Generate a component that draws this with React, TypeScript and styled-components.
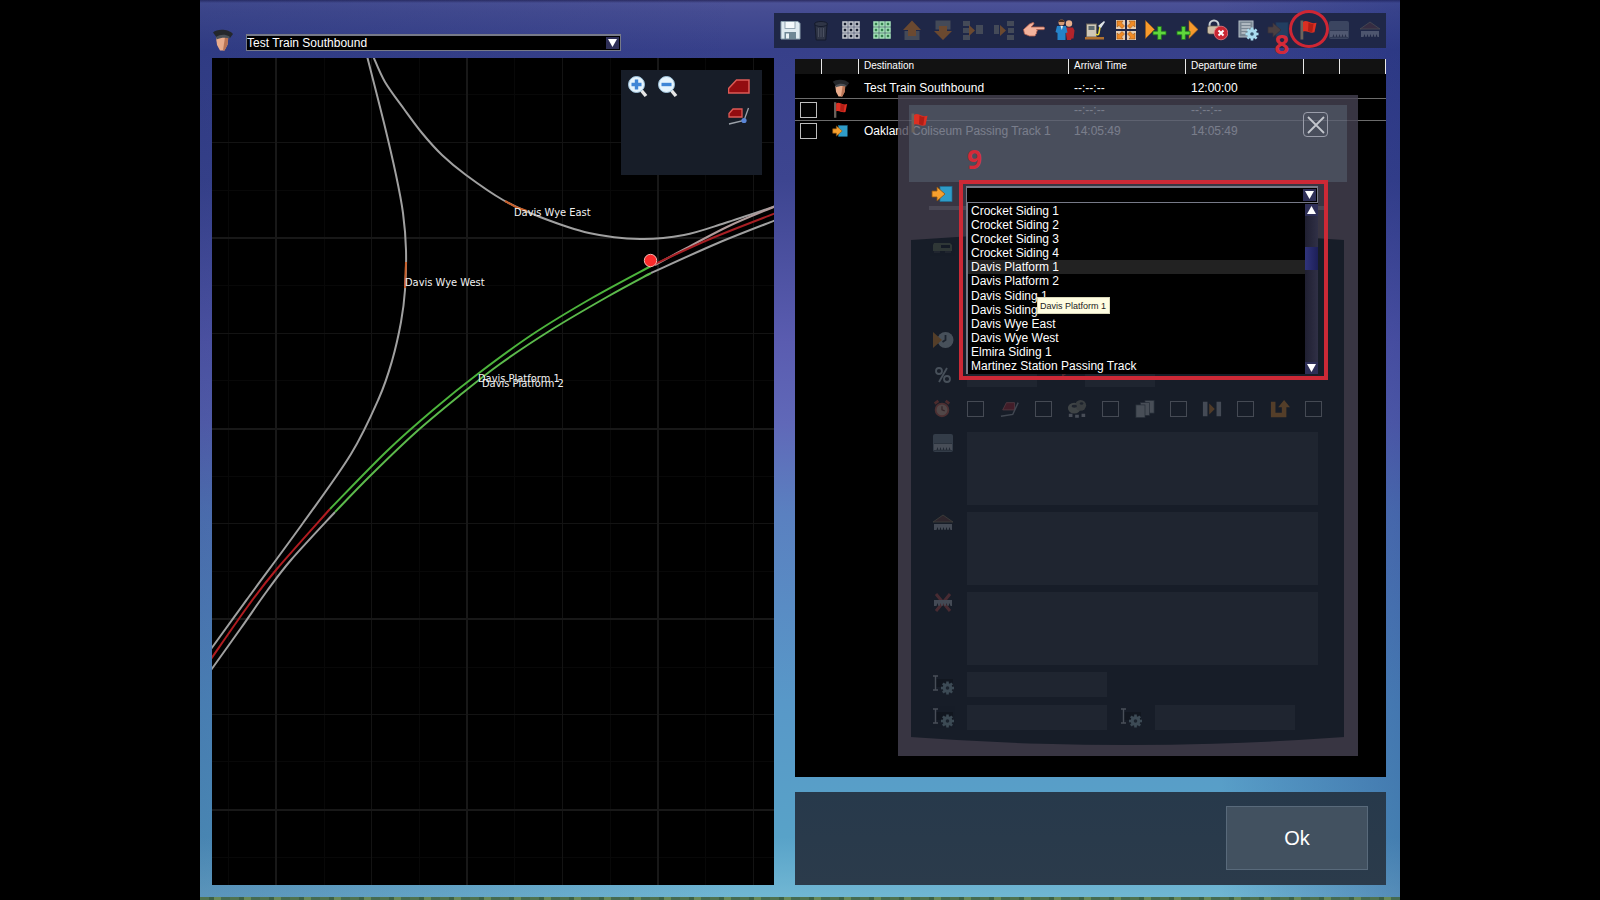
import React from "react";
import styled, { createGlobalStyle, css } from "styled-components";

const Global = createGlobalStyle`
  *, *::before, *::after { box-sizing: border-box; }
  body { margin: 0; background: #000; }
  button, input, select, textarea { font: inherit; color: inherit; margin: 0; }
`;

/* ---------- icons ---------- */

type Part = React.ReactNode;

const gear = (cx: number, cy: number, r: number, fill: string, hole: string): Part => (
  <g>
    {[0, 45, 90, 135].map((a) => (
      <rect key={a} x={cx - 1.3} y={cy - r} width={2.6} height={r * 2} fill={fill} transform={`rotate(${a} ${cx} ${cy})`} />
    ))}
    <circle cx={cx} cy={cy} r={r * 0.74} fill={fill} />
    <circle cx={cx} cy={cy} r={r * 0.28} fill={hole} />
  </g>
);

const dots = (stroke: string, fill: string): Part =>
  [0, 1, 2].map((r) =>
    [0, 1, 2].map((c) => (
      <rect key={`${r}${c}`} x={3 + c * 6} y={3 + r * 6} width={4} height={4} fill={fill} stroke={stroke} strokeWidth={1.5} />
    ))
  );

const greenPlus = (x: number, y: number): Part => (
  <path d={`M${x - 1.8} ${y - 6.5}h3.600v4.700h4.700v3.600h-4.700v4.700h-3.600v-4.700h-4.700v-3.600h4.700z`} fill="#5fd83c" stroke="#1f7a1c" strokeWidth="0.8" />
);

const teeth = (y: number, fill: string): Part => (
  <path d={`M2 ${y}h18v6h-1.5l-1-3-1 3h-1l-1-3-1 3h-1l-1-3-1 3h-1l-1-3-1 3h-1l-1-3-1 3H2z`} fill={fill} />
);

const icons: Record<string, Part> = {
  save: (
    <g>
      <path d="M2 2.5h17l2 2V20H2z" fill="#dfeaf0" stroke="#8ba0ae" />
      <rect x="6" y="2.5" width="10" height="7" fill="#f4f9fb" stroke="#7f93a1" strokeWidth="0.8" />
      <rect x="5.5" y="13" width="11.5" height="7" fill="#6f8795" />
      <rect x="7" y="14.5" width="3" height="5" fill="#e9f1f5" />
    </g>
  ),
  bin: (
    <g fill="#2f3546" stroke="#151b2c">
      <path d="M5 6h12l-1.2 15H6.200z" />
      <ellipse cx="11" cy="5" rx="6.500" ry="2.500" />
      <path d="M8.500 9v9M11 9v9M13.500 9v9" stroke="#4a5060" />
    </g>
  ),
  grid: <g>{dots("#c9ccd4", "#1a2033")}</g>,
  gridGreen: <g>{dots("#a8e8bc", "#36804f")}</g>,
  up: (
    <g>
      <rect x="3.500" y="12" width="15" height="9" fill="#444a58" />
      <path d="M11 1.500l9 9.500h-5v6H7v-6H2z" fill="#6b4930" />
    </g>
  ),
  down: (
    <g>
      <rect x="3.500" y="1.500" width="15" height="9" fill="#444a58" />
      <path d="M11 21l9-9h-5V7H7v5H2z" fill="#6b4930" />
    </g>
  ),
  merge: (
    <g>
      <path d="M1 2h7v5H1zM1 9h6v5H1zM1 16h7v5H1zM14 6h7v9h-7z" fill="#444a58" />
      <path d="M7 6l6 5.500-6 5.500z" fill="#6b4930" />
    </g>
  ),
  split: (
    <g>
      <path d="M14 2h7v5h-7zM15 9h6v5h-6zM14 16h7v5h-7zM1 6h5v9H1z" fill="#444a58" />
      <path d="M7 6l6 5.500-6 5.500z" fill="#6b4930" />
    </g>
  ),
  hand: (
    <path
      d="M0.500 10.500l6-5.500 3.500-1.500c1.500 0 1 1.500 0 2.500l-2 2h12.500c1.500 0 1.500 2.600 0 2.600h-7c1.300.5 1 2.200-.2 2.400.8.8.3 2-.7 2.200.3 1-.3 1.800-1.500 1.800H6.500L1.500 15z"
      fill="#f3b39d" stroke="#b5604c" strokeWidth="0.800"
    />
  ),
  people: (
    <g>
      <circle cx="15" cy="4.500" r="3.200" fill="#e9b08c" />
      <path d="M11 8.500h8l1.500 3-1 8h-2L17 21h-4z" fill="#b3242b" />
      <circle cx="7.500" cy="3.500" r="3" fill="#d79a72" />
      <path d="M4.500 3c0-3.500 6-3.500 6 0z" fill="#4a2e1c" />
      <path d="M3 7h9l1.500 6.500-2 .5V21h-8v-7L1.500 13z" fill="#2583c9" />
      <path d="M6.500 7h2.500l-1.200 4z" fill="#e8f2fa" />
    </g>
  ),
  pump: (
    <g>
      <rect x="2.500" y="5" width="10" height="13" fill="#cfc8b8" stroke="#6b655a" />
      <rect x="4.500" y="7" width="6" height="4" fill="#5d6a70" />
      <rect x="1" y="18" width="19" height="2.500" fill="#b0702f" />
      <path d="M12 15c5 4 2-9 6-10" fill="none" stroke="#e6d83a" strokeWidth="1.600" />
      <path d="M14 7l6-5 1 1-4 6z" fill="#dde3e8" />
    </g>
  ),
  spread: (
    <g>
      <rect x="1" y="1" width="9" height="9" fill="#e6cdb0" />
      <rect x="12" y="1" width="9" height="9" fill="#e6cdb0" />
      <rect x="1" y="12" width="9" height="9" fill="#e6cdb0" />
      <rect x="12" y="12" width="9" height="9" fill="#e6cdb0" />
      <path d="M2 2h6L6.500 4 9.500 7l-2.500 2.500-3-3L2 8zM20 2v6l-2-1.500-3 3L12.500 7l3-3L14 2zM2 20v-6l2 1.500 3-3L9.500 15l-3 3L8 20zM20 20h-6l1.500-2-3-3 2.500-2.500 3 3L20 14z" fill="#f08a24" stroke="#8b4a12" strokeWidth="0.500" />
    </g>
  ),
  addAfter: (
    <g>
      <path d="M0.500 1.500l9 9-9 9z" fill="#f79a2c" stroke="#9c5a14" strokeWidth="0.600" />
      {greenPlus(14.5, 14)}
    </g>
  ),
  addBefore: (
    <g>
      <path d="M13 1.500l9 9-9 9z" fill="#f79a2c" stroke="#9c5a14" strokeWidth="0.600" />
      {greenPlus(7.5, 14)}
    </g>
  ),
  remove: (
    <g>
      <circle cx="8" cy="6" r="4.500" fill="none" stroke="#c9d0d4" strokeWidth="2" />
      <rect x="1.500" y="7" width="13" height="8" rx="2" fill="#cdbfa8" stroke="#5c564c" strokeWidth="0.700" />
      <circle cx="15" cy="14" r="6.800" fill="#c92733" stroke="#e87a80" strokeWidth="0.800" />
      <path d="M12.500 11.500l5 5M17.500 11.500l-5 5" stroke="#fff" strokeWidth="2" />
    </g>
  ),
  settings: (
    <g>
      <rect x="2" y="2" width="14" height="16" fill="#7b8894" stroke="#b5bfc8" />
      <path d="M4.500 5h9M4.500 8h9M4.500 11h7M4.500 14h4" stroke="#e3e8ec" strokeWidth="1.200" />
      {gear(15, 15, 6.5, "#a9dbee", "#3a5870")}
    </g>
  ),
  goto: (
    <g>
      <rect x="9" y="3.500" width="12" height="15" fill="#2f9cc8" stroke="#1d6f94" strokeWidth="0.700" />
      <path d="M1 8h5V4l8 7-8 7v-4H1z" fill="#f6a02e" stroke="#8f5310" strokeWidth="0.800" />
    </g>
  ),
  flag: (
    <g>
      <rect x="2.500" y="1.500" width="2.800" height="19" fill="#6b635c" />
      <path d="M5 3c4-3 7 2.800 13.500.8l-2 9.500c-4.500 1.800-7-2.300-11.500-.8z" fill="#dc2f22" />
      <path d="M10.500 3.500c1.500 1.200 3 1.500 5 1.200l-1.200 8.300c-1.800 0-3-.4-4.300-1z" fill="#b01e16" />
    </g>
  ),
  platform: (
    <g>
      <rect x="1" y="2" width="20" height="18" rx="2" fill="#7d8c9b" />
      <rect x="2" y="11.500" width="18" height="7" fill="#3c4550" />
      {teeth(12, "#c3cad2")}
    </g>
  ),
  station: (
    <g>
      <path d="M1 10l10-7 10 7z" fill="#6b3a38" stroke="#a59a70" strokeWidth="0.800" />
      {teeth(12, "#b9c0c8")}
    </g>
  ),
  noStation: (
    <g>
      <path d="M4 2l14 17M18 2L4 19" stroke="#c7504e" strokeWidth="3" />
      {teeth(8, "#b9c0c8")}
    </g>
  ),
  officer: (
    <g>
      <path d="M4 8.500l12-1-.5 8-3 6H8L5 16z" fill="#e9ac8c" />
      <path d="M13 8h3.500l-1 8-3 5.500H11z" fill="#b97455" />
      <path d="M1 3.500C5-.5 17 0 21 5l-3 4c-3-2-9-1.500-12.500.5z" fill="#24272b" />
      <path d="M4 8c4-2.500 9-3 13.500-.5v2c-4-1.500-9-1-13 1z" fill="#4b5056" />
    </g>
  ),
  wagon: (
    <g>
      <path d="M2 6h16l2 2v6H1V8z" fill="#6f7d5e" />
      <rect x="9" y="8" width="9" height="3" fill="#141b26" />
      <path d="M2 15h6M13 15h6" stroke="#3b3f45" strokeWidth="2" />
    </g>
  ),
  clock: (
    <g>
      <circle cx="13.500" cy="11" r="8" fill="#c3d3dc" />
      <path d="M13.500 6v5l-3 2" fill="none" stroke="#26303b" strokeWidth="1.800" />
      <path d="M1 3l9 8-9 8z" fill="#f0952c" />
    </g>
  ),
  percent: (
    <g fill="none" stroke="#c3d3dc" strokeWidth="1.800">
      <circle cx="7" cy="7" r="3" />
      <circle cx="15" cy="15" r="3" />
      <path d="M15 4L7 18" />
    </g>
  ),
  dash: <path d="M2 5h10v-3l7 6-7 5v-3H2z" fill="#c7504e" />,
  alarm: (
    <g>
      <path d="M3 5l4-3M19 5l-4-3" stroke="#d6513c" strokeWidth="3" />
      <circle cx="11" cy="12" r="7" fill="#e8b49c" stroke="#d6604c" strokeWidth="2" />
      <path d="M11 8v4l3 1" fill="none" stroke="#7d3a2c" strokeWidth="1.400" />
    </g>
  ),
  engine: (
    <g>
      <path d="M3 12l4-8h9v8z" fill="#b3202c" stroke="#e07a7a" />
      <path d="M1 19l13-2 6-13" fill="none" stroke="#aeb4bd" strokeWidth="1.600" />
    </g>
  ),
  drums: (
    <g>
      <ellipse cx="8" cy="10" rx="7" ry="6" fill="#a8a894" />
      <ellipse cx="15" cy="7" rx="6" ry="6" fill="#90917f" />
      <ellipse cx="8" cy="8" rx="3" ry="1.600" fill="#30343a" />
      <ellipse cx="16" cy="5" rx="2" ry="1.400" fill="#30343a" />
      <path d="M2 18h4M9 19h4M16 18h4" stroke="#c6cbd2" strokeWidth="3.500" />
    </g>
  ),
  copies: (
    <g fill="#c6ced2" stroke="#4a525c" strokeWidth="0.800">
      <rect x="11" y="1.500" width="10" height="14" />
      <rect x="6" y="4" width="10" height="14" />
      <rect x="1" y="6.500" width="10" height="14" />
    </g>
  ),
  couple: (
    <g>
      <path d="M1 3h5v16H1zM16 3h5v16h-5z" fill="#b7c0c8" />
      <path d="M8 5l6 6-6 6z" fill="#e58a2a" />
    </g>
  ),
  turn: <path d="M1 3h5v12h7V9H9l6.500-8L22 9h-4v11H1z" fill="#f0952c" />,
  rename: (
    <g>
      <rect x="4" y="5" width="17" height="8" fill="#06090e" />
      <path d="M1 2h5M3.500 2v14M1 16h5" stroke="#c8ced5" strokeWidth="1.400" />
      {gear(15.5, 14, 6.5, "#9dc0c9", "#26343f")}
    </g>
  ),
  zoomIn: (
    <g>
      <path d="M14 14l5 6" stroke="#e6e6e6" strokeWidth="3.500" />
      <circle cx="9.500" cy="8.500" r="8" fill="#e6f4fd" stroke="#9fc4dd" />
      <path d="M9.500 3.500v10M4.500 8.500h10" stroke="#3f86d6" strokeWidth="3.400" />
    </g>
  ),
  zoomOut: (
    <g>
      <path d="M14 14l5 6" stroke="#e6e6e6" strokeWidth="3.500" />
      <circle cx="9.500" cy="8.500" r="8" fill="#e6f4fd" stroke="#9fc4dd" />
      <path d="M4.500 8.500h10" stroke="#3f86d6" strokeWidth="3.400" />
    </g>
  ),
  loco: <path d="M0.500 12.500l8-8.500h12.500v13H0.500z" fill="#930c10" stroke="#dd5a55" strokeWidth="1.500" />,
  locoPath: (
    <g>
      <path d="M1 7.500l4-4.500h9v8H1z" fill="#930c10" stroke="#dd5a55" strokeWidth="1.300" />
      <path d="M1 18l15-3.500 4.500-12.500" fill="none" stroke="#9da3ab" strokeWidth="1.300" />
      <circle cx="16" cy="14.500" r="2.600" fill="#5a86d8" />
    </g>
  ),
  close: <path d="M3 3l16 16M19 3L3 19" stroke="#c3c6cd" strokeWidth="1.800" fill="none" />,
};

const Glyph = styled.svg<{ $size: number; $dim: number }>`
  display: block;
  flex: none;
  width: ${(p) => p.$size}px;
  height: ${(p) => p.$size}px;
  opacity: ${(p) => p.$dim};
`;

const Icon = ({ name, size = 22, dim = 1 }: { name: string; size?: number; dim?: number }) => (
  <Glyph viewBox="0 0 22 22" $size={size} $dim={dim} aria-hidden="true">
    {icons[name]}
  </Glyph>
);

/* ---------- frame ---------- */

const Screen = styled.div`
  min-height: 100vh;
  display: flex;
  justify-content: center;
  background: #000;
  color: #fff;
  font: 12px/14px "Liberation Sans", Arial, sans-serif;
`;

const Stage = styled.div`
  width: 75%;
  display: flex;
  flex-direction: column;
  background:
    linear-gradient(90deg, rgba(24, 44, 110, 0.25), transparent 45%, transparent 85%, rgba(20, 40, 120, 0.3)),
    linear-gradient(180deg, #2c2c62 0, #4b5196 3px, #454c92 12px, #37408a 50px, #3d4590 20%, #5a5cb0 38%, #6068b8 47%, #5a80c0 57%, #5898c8 78%, #58a2c8 93%, #72b8d4 100%);
`;

const Workspace = styled.div`
  flex: 1;
  display: grid;
  grid-template-columns: 574fr 626fr;
  padding-bottom: 12px;
`;

const Grass = styled.div`
  height: 3px;
  background: repeating-linear-gradient(90deg, #4f7350 0 9px, #3d6146 9px 14px, #688a58 14px 21px, #456b52 21px 30px);
`;

const LeftColumn = styled.div`
  display: flex;
  flex-direction: column;
  padding-left: 12px;
`;

const RightColumn = styled.div`
  display: flex;
  flex-direction: column;
  padding: 13px 14px 0 0;
`;

const TrainBar = styled.div`
  height: 58px;
  display: flex;
  align-items: flex-start;
  gap: 12px;
  padding: 29px 0 0 0;
`;

/* ---------- drop-down ---------- */

const ComboBox = styled.div<{ $wide?: boolean }>`
  position: relative;
  height: 17px;
  border: 1px solid #777a88;
  border-top-width: 2px;
  background: #000;
  ${(p) =>
    p.$wide
      ? css`flex: 1;`
      : css`
          flex: 0 1 375px;
          margin-top: 5px;
        `}
`;

const ComboSelect = styled.select`
  display: block;
  appearance: none;
  width: 100%;
  height: 14px;
  padding: 0;
  border: 0;
  outline: 0;
  background: transparent;
  color: #fff;
  line-height: 14px;
`;

const arrowBox = css`
  display: flex;
  align-items: center;
  justify-content: center;
  width: 13px;
  height: 12px;
  padding: 0;
  border: 0;
  background: #2e2f57;
`;

const ComboArrow = styled.span`
  ${arrowBox}
  position: absolute;
  top: 1px;
  right: 1px;
  pointer-events: none;
`;

const Arrow = ({ up }: { up?: boolean }) => (
  <svg width="9" height="8" viewBox="0 0 9 8" aria-hidden="true">
    <path d={up ? "M4.500 0L9 8H0z" : "M0 0h9L4.500 8z"} fill="#fff" />
  </svg>
);

/* ---------- map ---------- */

const MapPanel = styled.section`
  position: relative;
  flex: 1;
  overflow: hidden;
  background: #000;
`;

const MapCanvas = styled.svg`
  position: absolute;
  inset: 0;
  width: 100%;
  height: 100%;
  font-family: "DejaVu Sans Condensed", "DejaVu Sans", sans-serif;
  font-size: 11px;
`;

const MapTools = styled.div`
  position: absolute;
  top: 12px;
  right: 12px;
  width: 141px;
  height: 105px;
  display: grid;
  grid-template-columns: 22px 22px 1fr;
  grid-template-rows: 22px 22px;
  gap: 8px;
  padding: 6px 12px 0 6px;
  background: #171d28;
`;

const ToolButton = styled.button<{ $end?: boolean }>`
  display: block;
  width: 22px;
  height: 22px;
  padding: 0;
  border: 0;
  background: none;
  ${(p) => p.$end && css`
    grid-column: 3;
    justify-self: end;
  `}
`;

type Point = [number, number];

const tracks: Record<string, Point[]> = {
  west: [[367, 56], [384, 123], [396, 175], [403, 213], [406, 250], [405, 290], [401, 322], [392, 361], [379, 398], [351, 454], [303, 523], [248, 598], [211, 649]],
  east: [[373, 56], [385, 82], [404, 109], [422, 133], [442, 155], [466, 175], [503, 200], [540, 217], [589, 233], [640, 239], [684, 235], [725, 223], [776, 206]],
  junction: [[655, 265], [681, 251], [729, 226], [776, 206]],
  lowerRight: [[651, 273], [718, 243], [776, 220]],
  redRight: [[655, 264], [710, 239], [776, 213]],
  greenA: [[651, 266], [592, 298], [533, 334], [479, 373], [433, 410], [387, 451], [330, 509]],
  greenB: [[651, 273], [607, 297], [551, 330], [500, 364], [459, 396], [415, 433], [370, 476], [335, 512]],
  redLeft: [[330, 509], [276, 570], [248, 606], [211, 659]],
  lowerLeft: [[335, 512], [291, 560], [267, 591], [241, 628], [211, 670]],
  stopEast: [[505, 201], [516, 207], [527, 211]],
  stopWest: [[406, 262], [405, 288]],
};

/* Runs a rounded curve through all points of a track. */
const curve = (p: Point[]) =>
  p.slice(1).reduce((d, end, i) => {
    const start = p[i];
    const before = p[i - 1] ?? start;
    const after = p[i + 2] ?? end;
    const c1 = [start[0] + (end[0] - before[0]) / 6, start[1] + (end[1] - before[1]) / 6];
    const c2 = [end[0] - (after[0] - start[0]) / 6, end[1] - (after[1] - start[1]) / 6];
    return `${d}C${c1} ${c2} ${end}`;
  }, `M${p[0]}`);

const Rail = styled.path<{ $c: string }>`
  fill: none;
  stroke: ${(p) => p.$c};
  stroke-width: 2;
`;

const Track = ({ id, color }: { id: string; color: string }) => <Rail d={curve(tracks[id])} $c={color} />;

const GREY = "#a0a0a0";
const major = { x: [275, 466, 657, 848], y: [237, 428, 618, 809] };
const middle = { x: [371, 562, 753], y: [142, 333, 523, 714] };
const minor = { x: [228, 324, 419, 514, 610, 705], y: [94, 190, 285, 380, 476, 571, 667, 761, 857] };

const GridLines = ({ set, color, w }: { set: { x: number[]; y: number[] }; color: string; w: number }) => (
  <g fill={color}>
    {set.x.map((x) => (
      <rect key={`x${x}`} x={x} y={58} width={w} height={900} />
    ))}
    {set.y.map((y) => (
      <rect key={`y${y}`} x={212} y={y} width={900} height={w} />
    ))}
  </g>
);

const TrackMap = () => (
  <MapCanvas viewBox="212 58 562 827" preserveAspectRatio="xMinYMin slice">
    <GridLines set={minor} color="#080808" w={1} />
    <GridLines set={middle} color="#131313" w={1} />
    <GridLines set={major} color="#181818" w={2} />
    <Track id="west" color={GREY} />
    <Track id="east" color={GREY} />
    <Track id="lowerRight" color={GREY} />
    <Track id="lowerLeft" color={GREY} />
    <Track id="junction" color="#b09a9a" />
    <Track id="redRight" color="#a81f24" />
    <Track id="redLeft" color="#b01c20" />
    <Track id="greenA" color="#4cb43c" />
    <Track id="greenB" color="#5cba4c" />
    <Track id="stopEast" color="#c8602c" />
    <Track id="stopWest" color="#c8602c" />
    <circle cx="650.500" cy="260.500" r="6.200" fill="#fb2b2b" stroke="#f3b6b0" />
    <g fill="#f2f2f2">
      <text x="514" y="216">Davis Wye East</text>
      <text x="405" y="286">Davis Wye West</text>
      <text x="478" y="382">Davis Platform 1</text>
      <text x="482" y="387">Davis Platform 2</text>
    </g>
  </MapCanvas>
);

/* ---------- toolbar ---------- */

const Toolbar = styled.div`
  position: relative;
  height: 35px;
  display: flex;
  align-items: flex-start;
  justify-content: space-between;
  padding: 6px 5px 0;
  background: #1f2747;
`;

const toolbarItems: { icon: string; label: string; dim?: number }[] = [
  { icon: "save", label: "Save" },
  { icon: "bin", label: "Delete" },
  { icon: "grid", label: "Select all" },
  { icon: "gridGreen", label: "Select group" },
  { icon: "up", label: "Move up" },
  { icon: "down", label: "Move down" },
  { icon: "merge", label: "Merge" },
  { icon: "split", label: "Split" },
  { icon: "hand", label: "Point" },
  { icon: "people", label: "Passengers" },
  { icon: "pump", label: "Refuel" },
  { icon: "spread", label: "Expand" },
  { icon: "addAfter", label: "Add after" },
  { icon: "addBefore", label: "Add before" },
  { icon: "remove", label: "Remove" },
  { icon: "settings", label: "Properties" },
  { icon: "goto", label: "Go to", dim: 0.2 },
  { icon: "flag", label: "Waypoint" },
  { icon: "platform", label: "Platform", dim: 0.3 },
  { icon: "station", label: "Station", dim: 0.3 },
];

const Marker = styled.span`
  position: absolute;
  color: #d42a38;
  font: bold 26px/26px "Noto Sans", sans-serif;
`;

const StepEight = styled(Marker)`
  top: 18px;
  right: 97px;
`;

const Ring = styled.span`
  position: absolute;
  top: -3px;
  right: 57px;
  width: 40px;
  height: 38px;
  border: 3px solid #cf2634;
  border-radius: 50%;
  pointer-events: none;
`;

/* ---------- timetable ---------- */

const TimetablePanel = styled.section`
  position: relative;
  flex: 1;
  margin: 11px 0 0 21px;
  background: #000;
`;

const Timetable = styled.table`
  width: 100%;
  table-layout: fixed;
  border-collapse: separate;
  border-spacing: 0;
`;

const HeadCell = styled.th`
  height: 15px;
  padding: 0 0 0 5px;
  border-right: 1px solid #e8e8e8;
  background: #121212;
  font-size: 10px;
  line-height: 14px;
  font-weight: normal;
  text-align: left;
  vertical-align: top;
`;

const Row = styled.tr<{ $height: number; $last?: boolean }>`
  td {
    height: ${(p) => p.$height}px;
    padding: 0 0 0 5px;
    border-bottom: ${(p) => (p.$last ? 0 : 1)}px solid #6c6c6c;
    white-space: nowrap;
  }
  td:nth-child(2) {
    padding-left: 10px;
  }
  &:first-child td {
    padding-top: 3px;
  }
`;

const TickBox = styled.input<{ $faint?: boolean }>`
  appearance: none;
  display: block;
  width: 17px;
  height: 16px;
  border: 1px solid ${(p) => (p.$faint ? "#454a54" : "#bdbdbd")};
  background: transparent;
`;

/* ---------- dialog ---------- */

const Dialog = styled.div`
  position: absolute;
  top: 36px;
  right: 28px;
  width: 460px;
  padding: 10px 0 11px;
  background: rgba(72, 68, 85, 0.78);
`;

const DialogHead = styled.header`
  height: 77px;
  display: flex;
  align-items: flex-start;
  justify-content: space-between;
  margin: 0 11px;
  padding: 7px 19px 0 0;
  background: rgba(176, 220, 240, 0.15);
`;

const CloseButton = styled.button`
  display: flex;
  align-items: center;
  justify-content: center;
  width: 25px;
  height: 25px;
  padding: 0;
  border: 1px solid #9a9daa;
  border-radius: 4px;
  background: none;
`;

const StepNine = styled(Marker)`
  top: 51px;
  left: 69px;
`;

const DestinationRow = styled.div`
  position: relative;
  display: flex;
  align-items: center;
  gap: 13px;
  height: 28px;
  padding: 0 40px 4px 33px;

  &::after {
    content: "";
    position: absolute;
    left: 31px;
    right: 33px;
    bottom: 0;
    height: 4px;
    background: #4a4855;
  }
`;

const Highlight = styled.div`
  position: absolute;
  z-index: 2;
  top: 85px;
  left: 61px;
  right: 30px;
  height: 200px;
  border: 4px solid #cc2936;
  pointer-events: none;
`;

const Popup = styled.div`
  position: absolute;
  z-index: 1;
  top: 15px;
  left: -1px;
  right: -1px;
  height: 171px;
  display: flex;
  padding-top: 1px;
  border-left: 2px solid #777a88;
  background: #000;
`;

const OptionList = styled.ul`
  flex: 1;
  display: flex;
  flex-direction: column;
  margin: 0;
  padding: 0;
  list-style: none;
`;

const Option = styled.li<{ $active?: boolean }>`
  flex: 1;
  display: flex;
  align-items: center;
  padding-left: 3px;
  background: ${(p) => (p.$active ? "#222" : "transparent")};
`;

const ScrollBar = styled.div`
  width: 13px;
  display: flex;
  flex-direction: column;
  justify-content: space-between;
  background: linear-gradient(90deg, #1f1f31, #303046);
`;

const ScrollButton = styled.button`
  ${arrowBox}
`;

const Thumb = styled.div`
  height: 23px;
  margin-bottom: 60px;
  background: linear-gradient(90deg, #30347c, #1d1f58);
`;

const Tooltip = styled.div`
  position: absolute;
  z-index: 3;
  top: 109px;
  left: 70px;
  height: 17px;
  padding: 0 3px 0 2px;
  border: 1px solid #d8d6b8;
  background: #fffde1;
  color: #222;
  font-size: 9px;
  line-height: 16px;
  white-space: nowrap;
`;

const DialogBody = styled.div`
  margin: 22px 14px 0 13px;
  height: 513px;
  padding: 5px 26px 0 21px;
  background: #171d28;
  clip-path: ellipse(202% 50% at 50% 50%);
`;

const FormRow = styled.div<{ $gap?: number }>`
  display: flex;
  align-items: center;
  gap: 13px;
  margin-top: ${(p) => p.$gap ?? 0}px;
`;

const NoteRow = styled(FormRow)`
  align-items: flex-start;
`;

const CheckRow = styled.div`
  display: flex;
  align-items: center;
  justify-content: space-between;
  height: 18px;
  margin: 13px -4px 14px 0;
`;

const CheckPair = styled.label`
  display: flex;
  align-items: center;
  gap: 15px;
`;

const field = css`
  display: block;
  padding: 0;
  border: 0;
  outline: 0;
  resize: none;
  background: #1f2530;
`;

const Note = styled.textarea`
  ${field}
  flex: 1;
  height: 73px;
`;

const Entry = styled.input<{ $w: number }>`
  ${field}
  width: ${(p) => p.$w}px;
  height: 25px;
`;

/* ---------- footer ---------- */

const Footer = styled.footer`
  height: 93px;
  display: flex;
  align-items: center;
  justify-content: flex-end;
  margin: 15px 0 0 21px;
  padding: 0 18px 2px 0;
  background: linear-gradient(180deg, #27394b, #2b3b4b);
`;

const OkButton = styled.button`
  width: 142px;
  height: 64px;
  border: 1px solid #596a7b;
  background: #425160;
  font-size: 20px;
  line-height: 24px;
`;

const destinations = [
  "Crocket Siding 1",
  "Crocket Siding 2",
  "Crocket Siding 3",
  "Crocket Siding 4",
  "Davis Platform 1",
  "Davis Platform 2",
  "Davis Siding 1",
  "Davis Siding 2",
  "Davis Wye East",
  "Davis Wye West",
  "Elmira Siding 1",
  "Martinez Station Passing Track",
];

const checks = ["alarm", "engine", "drums", "copies", "couple", "turn"];
const FADE = 0.28;

const WaypointDialog = () => (
  <Dialog role="dialog" aria-label="Waypoint">
    <DialogHead>
      <Icon name="flag" />
      <CloseButton aria-label="Close">
        <Icon name="close" />
      </CloseButton>
    </DialogHead>
    <StepNine>9</StepNine>
    <DestinationRow>
      <Icon name="goto" />
      <ComboBox $wide>
        <ComboSelect aria-label="Destination" defaultValue="">
          <option value="" />
        </ComboSelect>
        <ComboArrow>
          <Arrow />
        </ComboArrow>
        <Popup>
          <OptionList role="listbox" aria-label="Destinations">
            {destinations.map((d) => (
              <Option key={d} role="option" aria-selected={d === "Davis Platform 1"} $active={d === "Davis Platform 1"}>
                {d}
              </Option>
            ))}
          </OptionList>
          <ScrollBar>
            <ScrollButton aria-label="Scroll up">
              <Arrow up />
            </ScrollButton>
            <Thumb />
            <ScrollButton aria-label="Scroll down">
              <Arrow />
            </ScrollButton>
          </ScrollBar>
        </Popup>
        <Tooltip role="tooltip">Davis Platform 1</Tooltip>
      </ComboBox>
    </DestinationRow>
    <Highlight />
    <DialogBody>
      <FormRow>
        <Icon name="wagon" dim={FADE} />
      </FormRow>
      <FormRow $gap={70}>
        <Icon name="clock" dim={FADE} />
      </FormRow>
      <FormRow $gap={11}>
        <Icon name="percent" dim={FADE} />
        <Entry $w={70} aria-label="Percent" />
        <Icon name="dash" dim={FADE} />
        <Entry $w={70} aria-label="Speed" />
      </FormRow>
      <CheckRow>
        {checks.map((c) => (
          <CheckPair key={c}>
            <Icon name={c} size={20} dim={FADE} />
            <TickBox type="checkbox" aria-label={c} $faint />
          </CheckPair>
        ))}
      </CheckRow>
      <NoteRow>
        <Icon name="platform" dim={FADE} />
        <Note aria-label="Platform message" />
      </NoteRow>
      <NoteRow $gap={7}>
        <Icon name="station" dim={FADE} />
        <Note aria-label="Station message" />
      </NoteRow>
      <NoteRow $gap={7}>
        <Icon name="noStation" dim={FADE} />
        <Note aria-label="Failure message" />
      </NoteRow>
      <FormRow $gap={7}>
        <Icon name="rename" dim={FADE} />
        <Entry $w={140} aria-label="Name" />
      </FormRow>
      <FormRow $gap={8}>
        <Icon name="rename" dim={FADE} />
        <Entry $w={140} aria-label="First value" />
        <Icon name="rename" dim={FADE} />
        <Entry $w={140} aria-label="Second value" />
      </FormRow>
    </DialogBody>
  </Dialog>
);

export default function App() {
  return (
    <Screen>
      <Global />
      <Stage>
        <Workspace>
          <LeftColumn>
            <TrainBar>
              <Icon name="officer" />
              <ComboBox>
                <ComboSelect aria-label="Train" defaultValue="tts">
                  <option value="tts">Test Train Southbound</option>
                </ComboSelect>
                <ComboArrow>
                  <Arrow />
                </ComboArrow>
              </ComboBox>
            </TrainBar>
            <MapPanel>
              <TrackMap />
              <MapTools>
                <ToolButton aria-label="Zoom in">
                  <Icon name="zoomIn" />
                </ToolButton>
                <ToolButton aria-label="Zoom out">
                  <Icon name="zoomOut" />
                </ToolButton>
                <ToolButton aria-label="Show trains" $end>
                  <Icon name="loco" />
                </ToolButton>
                <ToolButton aria-label="Show paths" $end>
                  <Icon name="locoPath" />
                </ToolButton>
              </MapTools>
            </MapPanel>
          </LeftColumn>
          <RightColumn>
            <Toolbar role="toolbar">
              {toolbarItems.map((t) => (
                <ToolButton key={t.label} aria-label={t.label}>
                  <Icon name={t.icon} dim={t.dim} />
                </ToolButton>
              ))}
              <StepEight>8</StepEight>
              <Ring />
            </Toolbar>
            <TimetablePanel>
              <Timetable>
                <colgroup>
                  <col width="27" />
                  <col width="37" />
                  <col />
                  <col width="117" />
                  <col width="118" />
                  <col width="36" />
                  <col width="46" />
                </colgroup>
                <thead>
                  <tr>
                    <HeadCell />
                    <HeadCell />
                    <HeadCell>Destination</HeadCell>
                    <HeadCell>Arrival Time</HeadCell>
                    <HeadCell>Departure time</HeadCell>
                    <HeadCell />
                    <HeadCell />
                  </tr>
                </thead>
                <tbody>
                  <Row $height={25}>
                    <td />
                    <td>
                      <Icon name="officer" size={18} />
                    </td>
                    <td>Test Train Southbound</td>
                    <td>--:--:--</td>
                    <td>12:00:00</td>
                    <td />
                    <td />
                  </Row>
                  <Row $height={22}>
                    <td>
                      <TickBox type="checkbox" aria-label="Select waypoint" />
                    </td>
                    <td>
                      <Icon name="flag" size={18} />
                    </td>
                    <td />
                    <td>--:--:--</td>
                    <td>--:--:--</td>
                    <td />
                    <td />
                  </Row>
                  <Row $height={20} $last>
                    <td>
                      <TickBox type="checkbox" aria-label="Select Oakland Coliseum Passing Track 1" />
                    </td>
                    <td>
                      <Icon name="goto" size={16} />
                    </td>
                    <td>Oakland Coliseum Passing Track 1</td>
                    <td>14:05:49</td>
                    <td>14:05:49</td>
                    <td />
                    <td />
                  </Row>
                </tbody>
              </Timetable>
              <WaypointDialog />
            </TimetablePanel>
            <Footer>
              <OkButton>Ok</OkButton>
            </Footer>
          </RightColumn>
        </Workspace>
        <Grass />
      </Stage>
    </Screen>
  );
}
